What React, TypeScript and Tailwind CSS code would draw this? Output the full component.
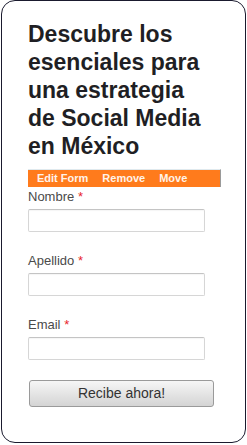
export default function App() {
  const fields = ["Nombre", "Apellido", "Email"];
  return (
    <div className="w-[247px] h-[445px] bg-white" style={{ fontFamily: '"Liberation Sans", Arial, sans-serif' }}>
      <div className="ml-[1px] w-[245px] h-[443px] rounded-[14px] border-[1.5px] border-[#1a1a2e] bg-white pt-[19px] pl-[26px]">
        <h1 className="text-[23px] leading-[28px] font-bold text-[#1f1f24]">
          Descubre los
          <br />
          esenciales para
          <br />
          una estrategia
          <br />
          de Social Media
          <br />
          en México
        </h1>
        <div className="mt-[9px] w-[193px] h-[18px] bg-[#ff7b1c] border-t border-t-[#dfe9ee] border-r border-r-[#9a9a9a] flex items-center pl-[9px] gap-[14px] text-[11px] font-bold text-[#fff3ea] leading-none">
          <span>Edit Form</span>
          <span>Remove</span>
          <span>Move</span>
        </div>
        <div className="flex flex-col gap-[21px] mt-[2px]">
          {fields.map((f) => (
            <div key={f} className="flex flex-col">
              <label className="text-[13px] leading-[15px] text-[#4a4a4a]">
                {f} <span className="text-[#e8252a]">*</span>
              </label>
              <div className="mt-[5px] w-[177px] h-[23px] rounded-[2px] border border-[#d6d6d6] border-t-[#c4c4c4] bg-white shadow-[inset_0_1px_1px_rgba(0,0,0,0.04)]" />
            </div>
          ))}
        </div>
        <button className="mt-[20px] ml-[1px] w-[185px] h-[27px] rounded-[3px] border border-[#9a9a9a] bg-gradient-to-b from-[#f6f6f6] to-[#d4d4d4] text-[14px] text-[#333] flex items-center justify-center" style={{ fontFamily: '"Liberation Sans", Arial, sans-serif' }}>
          Recibe ahora!
        </button>
      </div>
    </div>
  );
}
